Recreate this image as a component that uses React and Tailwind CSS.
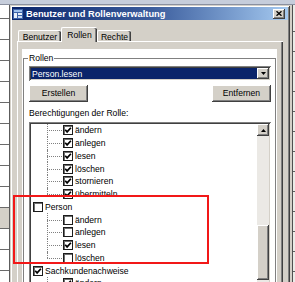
const raised =
  'shadow-[inset_-1px_-1px_#404040,inset_1px_1px_#ffffff,inset_-2px_-2px_#808080,inset_2px_2px_#d4d0c8]';
const sunken =
  'shadow-[inset_1px_1px_#808080,inset_-1px_-1px_#ffffff,inset_2px_2px_#404040,inset_-2px_-2px_#d4d0c8]';

const rows = [
  { label: 'ändern', checked: true, child: true },
  { label: 'anlegen', checked: true, child: true },
  { label: 'lesen', checked: true, child: true },
  { label: 'löschen', checked: true, child: true },
  { label: 'stornieren', checked: true, child: true },
  { label: 'übermitteln', checked: true, child: true, last: true },
  { label: 'Person', checked: false },
  { label: 'ändern', checked: false, child: true },
  { label: 'anlegen', checked: false, child: true },
  { label: 'lesen', checked: true, child: true },
  { label: 'löschen', checked: false, child: true, last: true },
  { label: 'Sachkundenachweise', checked: true },
  { label: 'ändern', checked: true, child: true },
  { label: 'anlegen', checked: true, child: true },
];

function Check({ checked }) {
  return (
    <span className="flex h-[10px] w-[10px] flex-none items-center justify-center border border-[#1c1c1c] bg-white shadow-[inset_1px_1px_#6f6f6f]">
      {checked && (
        <svg width="8" height="8" viewBox="0 0 8 8">
          <path d="M1.2 3.8 3.1 5.9 6.9 1.7" fill="none" stroke="#000" strokeWidth="1.7" />
        </svg>
      )}
    </span>
  );
}

function TreeRow({ row }) {
  return (
    <div className="flex h-[12.75px] flex-none items-center">
      {row.child ? (
        <>
          <span className="w-[16px] flex-none" />
          <span className="relative h-full w-[16px] flex-none">
            <span
              className={`absolute left-0 top-0 border-l border-dotted border-[#808080] ${row.last ? 'h-1/2' : 'h-full'}`}
            />
            <span className="absolute left-0 top-1/2 w-[15px] border-t border-dotted border-[#808080]" />
          </span>
        </>
      ) : (
        <span className="w-[2px] flex-none" />
      )}
      <Check checked={row.checked} />
      <span className="ml-[2px] whitespace-nowrap leading-[10px]">{row.label}</span>
    </div>
  );
}

function Tab({ label, active, width }) {
  return (
    <div
      className={
        active
          ? 'relative z-10 -mb-[1px] flex h-[15px] items-start justify-center rounded-t-[2px] border-l border-t border-white bg-[#d4d0c8] pt-[2px] shadow-[inset_-1px_0_#404040,inset_-2px_0_#808080]'
          : 'flex h-[11px] items-center justify-center rounded-t-[2px] border-l border-t border-white bg-[#d4d0c8] pt-[1px] shadow-[inset_-1px_0_#404040,inset_-2px_0_#808080]'
      }
      style={{ width }}
    >
      <span className="leading-[10px]">{label}</span>
    </div>
  );
}

export default function App() {
  return (
    <div className="relative flex h-[282px] w-[295px] flex-col overflow-hidden bg-[#d4d0c8] font-['Liberation_Sans',Arial,sans-serif] text-[8.6px] text-black">
      <div className="h-[5px] flex-none border-b border-[#8a90a0] bg-[#c6cddb]" />
      <div className="flex flex-1">
        {/* background window, left */}
        <div className="flex w-[10px] flex-none flex-col border-r border-[#5c5c5c] bg-white">
          <div className="h-[14px] flex-none border-b border-[#6a6a6a]" />
          {Array.from({ length: 12 }).map((_, i) => (
            <div
              key={i}
              className={
                i === 9
                  ? 'h-[21px] flex-none border-b border-[#6a6a6a] bg-[#d4d0c8]'
                  : 'h-[21px] flex-none border-b border-[#6a6a6a]'
              }
            />
          ))}
        </div>

        {/* dialog */}
        <div className="flex w-[280px] flex-none flex-col bg-[#d4d0c8] p-[2px] shadow-[inset_1px_1px_#d4d0c8,inset_-1px_-1px_#404040,inset_2px_2px_#ffffff,inset_-2px_-2px_#808080]">
          <div className="flex h-[13px] flex-none items-center bg-linear-to-r from-[#0a246a] via-[#3b5c9c] to-[#a6caf0]">
            <svg className="ml-[1px] flex-none" width="10" height="10" viewBox="0 0 10 10">
              <rect x="0" y="0" width="10" height="10" fill="#3d63a8" />
              <rect x="1" y="1" width="8" height="2" fill="#9fc0ec" />
              <rect x="1" y="4" width="3" height="5" fill="#e8eef8" />
              <rect x="5" y="4" width="4" height="2" fill="#e8eef8" />
              <rect x="5" y="7" width="4" height="2" fill="#c9d8f0" />
            </svg>
            <span className="ml-[3px] whitespace-nowrap text-[9.3px] font-bold leading-[10px] text-white">
              Benutzer und Rollenverwaltung
            </span>
            <div className={`ml-auto mr-[3px] flex h-[10px] w-[12px] flex-none items-center justify-center bg-[#d4d0c8] ${raised}`}>
              <svg width="6" height="5" viewBox="0 0 6 5">
                <path d="M0.5 0.3 5.5 4.7 M5.5 0.3 0.5 4.7" stroke="#000" strokeWidth="1.4" />
              </svg>
            </div>
          </div>

          <div className="mt-[7px] flex h-[14px] flex-none items-end pl-[6px]">
            <Tab label="Benutzer" width={43} />
            <Tab label="Rollen" width={36} active />
            <Tab label="Rechte" width={34} />
          </div>

          <div className="ml-[5px] flex h-[260px] w-[266px] flex-none flex-col border-l border-t border-white bg-[#d4d0c8] pl-[4px] pr-[6px] pt-[7px] shadow-[inset_-1px_0_#404040,inset_-2px_0_#808080]">
            <div className="flex flex-1 flex-col bg-white px-[1px] pt-[4px]">
              <fieldset className="flex flex-col border border-[#808080] pb-[4px] pl-[5px] pr-[4px] pt-[3px]">
                <legend className="-ml-[1px] px-[1px] leading-[10px]">Rollen</legend>

                <div className={`flex h-[15px] bg-white p-[2px] ${sunken}`}>
                  <div className="flex flex-1 items-center bg-[#0a246a] pl-[1px] leading-[10px] text-white">
                    Person.lesen
                  </div>
                  <div className={`flex w-[12px] flex-none items-center justify-center bg-[#d4d0c8] ${raised}`}>
                    <svg width="5" height="3" viewBox="0 0 5 3">
                      <path d="M0 0h5L2.5 3z" fill="#000" />
                    </svg>
                  </div>
                </div>

                <div className="mt-[4px] flex justify-between">
                  <div className={`flex h-[17px] w-[59px] items-center justify-center bg-[#d4d0c8] ${raised}`}>
                    Erstellen
                  </div>
                  <div className={`flex h-[17px] w-[59px] items-center justify-center bg-[#d4d0c8] ${raised}`}>
                    Entfernen
                  </div>
                </div>

                <div className="flex h-[20px] items-center pt-[2px] leading-[10px]">Berechtigungen der Rolle:</div>

                <div className={`flex h-[170px] bg-white p-[2px] ${sunken}`}>
                  <div className="flex flex-1 flex-col overflow-hidden">
                    {rows.map((row, i) => (
                      <TreeRow key={i} row={row} />
                    ))}
                  </div>
                  <div className="flex w-[12px] flex-none flex-col bg-[#ebe9e5]">
                    <div className={`flex h-[12px] flex-none items-center justify-center bg-[#d4d0c8] ${raised}`}>
                      <svg width="5" height="3" viewBox="0 0 5 3">
                        <path d="M0 3h5L2.5 0z" fill="#000" />
                      </svg>
                    </div>
                    <div className="h-[89px] flex-none" />
                    <div className={`h-[55px] flex-none bg-[#d4d0c8] ${raised}`} />
                  </div>
                </div>
              </fieldset>
            </div>
          </div>
        </div>

        {/* background window, right */}
        <div className="flex w-[5px] flex-none">
          <div className="w-[2px] bg-[#d4d0c8]" />
          <div className="w-[1px] bg-[#505050]" />
          <div className="flex w-[2px] flex-col bg-[#ecebe7] pt-[26px]">
            {Array.from({ length: 13 }).map((_, i) => (
              <div key={i} className="h-[20px] flex-none border-t border-[#606060]" />
            ))}
          </div>
        </div>
      </div>

      {/* annotation */}
      <div className="absolute left-[13px] top-[195px] h-[69px] w-[196px] border-2 border-[#f21818]" />
    </div>
  );
}
